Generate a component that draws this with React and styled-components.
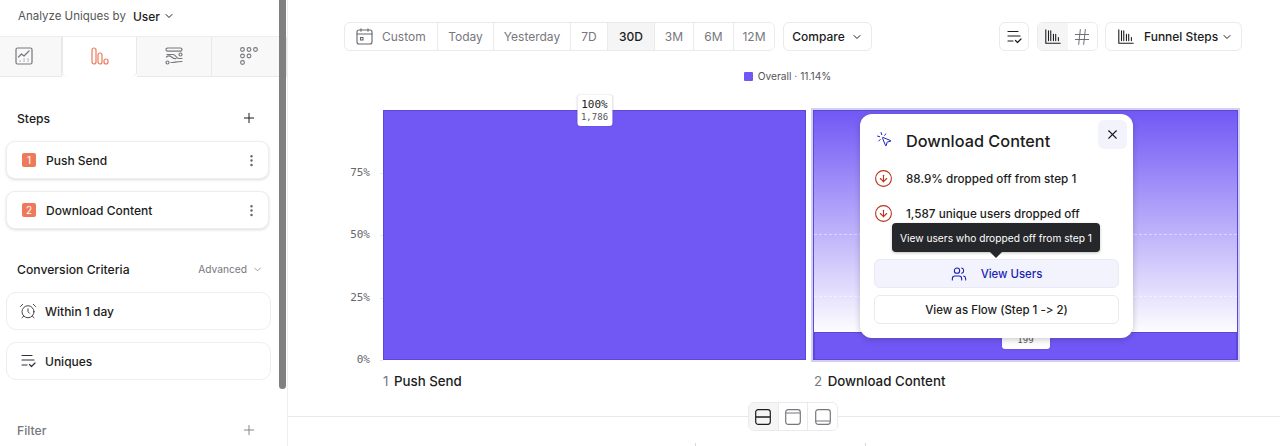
import React from "react";
import styled, { createGlobalStyle } from "styled-components";
import { AlarmClock, ChevronDown, CircleArrowDown, EllipsisVertical, Hash, MousePointerClick, Plus, Users, X } from "lucide-react";

const GlobalStyle = createGlobalStyle`
  html, body {
    margin: 0;
    height: 446px;
    overflow: hidden;
    background: #fff;
    color: #1c1c21;
    font-family: "Inter", "Liberation Sans", sans-serif;
    font-variant-ligatures: none;
    font-feature-settings: "calt" 0, "liga" 0;
    -webkit-font-smoothing: antialiased;
  }
  * { box-sizing: border-box; }
`;

const RANGES = [
  { label: "Today", width: 56 },
  { label: "Yesterday", width: 77 },
  { label: "7D", width: 37 },
  { label: "30D", width: 47, active: true },
  { label: "3M", width: 39 },
  { label: "6M", width: 40 },
  { label: "12M", width: 41 },
];

function ChartIcon({ size = 20 }) {
  return (
    <svg width={size} height={size} viewBox="0 0 20 20" fill="none" stroke="currentColor" strokeWidth="1.2" strokeLinecap="round">
      <path d="M2 2v15h16" />
      <path d="M5 3v11M7.5 3v11M10.5 7v7M13 7v7M16 10.5V14" />
    </svg>
  );
}

function ListCheckIcon({ size = 18 }) {
  return (
    <svg width={size} height={size} viewBox="0 0 18 18" fill="none" stroke="currentColor" strokeWidth="1.2" strokeLinecap="round" strokeLinejoin="round">
      <path d="M3 3.5h10M3 8h12M3 13h5M10.5 12.5l2 2 3.5-3.5" />
    </svg>
  );
}

function TrendTabIcon() {
  return (
    <svg width="18" height="18" viewBox="0 0 18 18" fill="none" stroke="#77777d" strokeWidth="1.2" strokeLinecap="round" strokeLinejoin="round">
      <rect x="1" y="1" width="16" height="16" rx="1.5" />
      <path d="M3.5 10l3-3 2.5 2 5-5" />
      <path d="M5 14h.1M9 14h.1M13 14h.1M9 12h.1M13 12h.1" />
    </svg>
  );
}

function FunnelTabIcon() {
  return (
    <svg width="18" height="18" viewBox="0 0 18 18" fill="none" stroke="#ee7a5c" strokeWidth="1.2">
      <rect x="1" y="1" width="4" height="16" rx="2" />
      <rect x="7" y="6" width="4" height="11" rx="2" />
      <rect x="13" y="12" width="4" height="5" rx="2" />
    </svg>
  );
}

function FlowTabIcon() {
  return (
    <svg width="18" height="18" viewBox="0 0 18 18" fill="none" stroke="#77777d" strokeWidth="1.2" strokeLinecap="round">
      <rect x="1" y="1" width="16" height="3.2" rx="1.6" />
      <path d="M1.5 10c4-4 6 3 9.5 1.500" />
      <path d="M2 7.500h6c3 0 3 4 6 4h3" />
      <circle cx="15.500" cy="7.500" r="1.500" />
      <circle cx="2.500" cy="15.500" r="1.500" />
      <path d="M6 15.500h2c2 0 3-1 9-1" />
    </svg>
  );
}

function RetentionTabIcon() {
  const dots = [[2.500, 2.500], [9, 2.500], [15.500, 2.500], [2.500, 9], [9, 9], [2.500, 15.500]];
  return (
    <svg width="18" height="18" viewBox="0 0 18 18" fill="none" stroke="#77777d" strokeWidth="1.1">
      {dots.map(([x, y]) => (
        <circle key={`${x}-${y}`} cx={x} cy={y} r="1.900" />
      ))}
    </svg>
  );
}

function CalendarIcon() {
  return (
    <svg width="17" height="17" viewBox="0 0 17 17" fill="none" stroke="#66666c" strokeWidth="1.100" strokeLinecap="round">
      <rect x="1" y="2" width="15" height="14" rx="2" />
      <path d="M1 6h15M5 .8v2.400M12 .8v2.400" />
      <rect x="4.500" y="9.500" width="2.500" height="2.500" />
    </svg>
  );
}

function PaneIcon({ variant, active }) {
  return (
    <svg width="16" height="16" viewBox="0 0 16 16" fill="none" stroke={active ? "#1c1c21" : "#77777d"} strokeWidth="1.200">
      <rect x=".7" y=".7" width="14.600" height="14.600" rx="2.500" />
      {variant === "split" && <path d="M1 8h14" strokeWidth="1.600" />}
      {variant === "top" && <path d="M1 4h14" />}
      {variant === "bottom" && <path d="M1 12h14" />}
    </svg>
  );
}

export default function App() {
  return (
    <Page>
      <GlobalStyle />
      <Sidebar>
        <AnalyzeBar>
          Analyze Uniques by <strong>User</strong>
          <ChevronDown size={12} strokeWidth={2} color="#1c1c21" />
        </AnalyzeBar>
        <Tabs>
          <Tab><TrendTabIcon /></Tab>
          <Tab $active><FunnelTabIcon /></Tab>
          <Tab><FlowTabIcon /></Tab>
          <Tab><RetentionTabIcon /></Tab>
        </Tabs>
        <SectionHead $top={30}>
          Steps
          <Plus size={16} strokeWidth={1.500} color="#1c1c21" />
        </SectionHead>
        <StepList>
          <StepCard>
            <StepBadge>1</StepBadge>
            <CardText>Push Send</CardText>
            <EllipsisVertical size={15} color="#66666c" />
          </StepCard>
          <StepCard>
            <StepBadge>2</StepBadge>
            <CardText>Download Content</CardText>
            <EllipsisVertical size={15} color="#66666c" />
          </StepCard>
        </StepList>
        <SectionHead $top={29}>
          Conversion Criteria
          <AdvancedLink>
            Advanced
            <ChevronDown size={11} strokeWidth={1.500} />
          </AdvancedLink>
        </SectionHead>
        <CriteriaList>
          <CriteriaCard>
            <AlarmClock size={18} strokeWidth={1.200} color="#33333a" />
            <CardText>Within 1 day</CardText>
          </CriteriaCard>
          <CriteriaCard>
            <ListCheckIcon size={18} />
            <CardText>Uniques</CardText>
          </CriteriaCard>
        </CriteriaList>
        <SectionHead $top={39} $muted>
          Filter
          <Plus size={16} strokeWidth={1.300} color="#77777d" />
        </SectionHead>
      </Sidebar>
      <ScrollTrack>
        <ScrollThumb />
      </ScrollTrack>
      <Main>
        <Toolbar>
          <Segments>
            <CustomRange>
              <CalendarIcon />
              Custom
            </CustomRange>
            {RANGES.map((range) => (
              <RangeButton key={range.label} $width={range.width} $active={range.active}>
                {range.label}
              </RangeButton>
            ))}
          </Segments>
          <CompareButton>
            Compare
            <ChevronDown size={12} strokeWidth={2} />
          </CompareButton>
          <ToolbarRight>
            <IconButton><ListCheckIcon size={18} /></IconButton>
            <ViewToggle>
              <ToggleCell $active><ChartIcon size={18} /></ToggleCell>
              <ToggleCell><Hash size={20} strokeWidth={1.100} color="#66666c" /></ToggleCell>
            </ViewToggle>
            <FunnelSelect>
              <ChartIcon size={18} />
              <span>Funnel Steps</span>
              <ChevronDown size={12} strokeWidth={2} />
            </FunnelSelect>
          </ToolbarRight>
        </Toolbar>
        <Legend>
          <LegendSwatch />
          Overall · 11.14%
        </Legend>
        <ChartArea>
          <YAxis>
            <span>75%</span>
            <span>50%</span>
            <span>25%</span>
            <span>0%</span>
          </YAxis>
          <Plot>
            <BarColumn>
              <SolidBar $height={250}>
                <ValuePill>
                  <b>100%</b>
                  <i>1,786</i>
                </ValuePill>
              </SolidBar>
            </BarColumn>
            <BarColumn $selected>
              <GridLine $bottom={125} />
              <GridLine $bottom={63} />
              <SolidBar $height={28}>
                <ValuePill $covered>
                  <i>199</i>
                </ValuePill>
              </SolidBar>
            </BarColumn>
            <Popover>
              <PopoverHead>
                <MousePointerClick size={17} strokeWidth={1.400} color="#1a1fb5" />
                <PopoverTitle>Download Content</PopoverTitle>
                <CloseButton><X size={15} strokeWidth={1.800} /></CloseButton>
              </PopoverHead>
              <DropRow>
                <CircleArrowDown size={19} strokeWidth={1.400} color="#b8341c" />
                88.9% dropped off from step 1
              </DropRow>
              <DropRow>
                <CircleArrowDown size={19} strokeWidth={1.400} color="#b8341c" />
                1,587 unique users dropped off
              </DropRow>
              <Tooltip>View users who dropped off from step 1</Tooltip>
              <PrimaryAction>
                <Users size={16} strokeWidth={1.600} />
                View Users
              </PrimaryAction>
              <SecondaryAction>View as Flow (Step 1 -&gt; 2)</SecondaryAction>
            </Popover>
          </Plot>
        </ChartArea>
        <StepLabels>
          <StepLabel><em>1</em> Push Send</StepLabel>
          <StepLabel><em>2</em> Download Content</StepLabel>
        </StepLabels>
        <PaneDivider>
          <PaneToggle>
            <PaneCell $active><PaneIcon variant="split" active /></PaneCell>
            <PaneCell><PaneIcon variant="top" /></PaneCell>
            <PaneCell><PaneIcon variant="bottom" /></PaneCell>
          </PaneToggle>
        </PaneDivider>
        <LowerTicks>
          <i />
          <i />
        </LowerTicks>
      </Main>
    </Page>
  );
}

const Page = styled.div`
  display: flex;
  width: 1280px;
  height: 446px;
  overflow: hidden;
`;

const Sidebar = styled.aside`
  width: 279px;
  flex: none;
  display: flex;
  flex-direction: column;
`;

const AnalyzeBar = styled.div`
  height: 37px;
  padding: 0 0 4px 18px;
  display: flex;
  align-items: center;
  gap: 4px;
  font-size: 11.5px;
  color: #55555b;
  border-bottom: 1px solid #eeeeef;

  strong {
    margin-left: 3px;
    font-size: 12px;
    font-weight: 500;
    color: #1c1c21;
  }
  svg {
    margin-left: -1px;
  }
`;

/* first and last tabs run under the sidebar's edges */
const Tabs = styled.div`
  height: 40px;
  margin-left: -13px;
  display: flex;
`;

const Tab = styled.div`
  width: 75px;
  flex: none;
  display: flex;
  align-items: center;
  justify-content: center;
  padding-bottom: 2px;
  background: ${(p) => (p.$active ? "#fff" : "#f8f8f8")};
  border-bottom: ${(p) => (p.$active ? "none" : "1px solid #e9e9ea")};
  border-left: ${(p) => (p.$active ? "1px solid #e9e9ea" : "none")};
  border-right: 1px solid #e9e9ea;
  border-radius: ${(p) => (p.$active ? "0 0 5px 5px" : "0")};
`;

const SectionHead = styled.div`
  margin-top: ${(p) => p.$top}px;
  height: 22px;
  padding: 0 22px 0 17px;
  display: flex;
  align-items: center;
  justify-content: space-between;
  font-size: 12.2px;
  font-weight: 500;
  color: ${(p) => (p.$muted ? "#77777d" : "#1c1c21")};
`;

const AdvancedLink = styled.span`
  display: flex;
  align-items: center;
  gap: 5px;
  margin-right: -6px;
  font-size: 10.2px;
  font-weight: 400;
  color: #77777d;
`;

const StepList = styled.div`
  margin-top: 12px;
  padding: 0 10px 0 6px;
  display: flex;
  flex-direction: column;
  gap: 12px;
`;

const StepCard = styled.div`
  height: 38px;
  padding: 0 9px 0 15px;
  display: flex;
  align-items: center;
  gap: 10px;
  background: #fff;
  border: 1px solid #eeeeef;
  border-radius: 9px;
  box-shadow: 0 1px 3px rgba(0, 0, 0, 0.14);
`;

const StepBadge = styled.span`
  width: 14px;
  height: 14px;
  flex: none;
  display: flex;
  align-items: center;
  justify-content: center;
  font-size: 10px;
  color: #fff;
  background: #ee7a5c;
  border-radius: 2px;
`;

const CardText = styled.span`
  flex: 1;
  font-size: 12px;
  font-weight: 450;
`;

const CriteriaList = styled.div`
  margin-top: 12px;
  padding: 0 8px 0 6px;
  display: flex;
  flex-direction: column;
  gap: 12px;
`;

const CriteriaCard = styled.div`
  height: 38px;
  padding: 0 12px;
  display: flex;
  align-items: center;
  gap: 8px;
  border: 1px solid #eeeeef;
  border-radius: 10px;
  color: #33333a;

  ${CardText} {
    color: #1c1c21;
  }
`;

const ScrollTrack = styled.div`
  width: 9px;
  flex: none;
  padding-right: 1px;
  border-right: 1px solid #eeeeef;
`;

const ScrollThumb = styled.div`
  width: 7px;
  height: 389px;
  background: #808080;
  border-radius: 0 0 4px 4px;
`;

const Main = styled.main`
  flex: 1;
  min-width: 0;
  display: flex;
  flex-direction: column;
`;

const Toolbar = styled.div`
  margin-top: 22px;
  padding: 0 38px 0 56px;
  display: flex;
  gap: 8px;
  height: 29px;
`;

const Segments = styled.div`
  display: flex;
  border: 1px solid #eaeaeb;
  border-radius: 6px;
  overflow: hidden;
`;

const CustomRange = styled.div`
  width: 92px;
  padding-left: 11px;
  display: flex;
  align-items: center;
  gap: 9px;
  font-size: 12px;
  color: #77777d;
`;

const RangeButton = styled.div`
  width: ${(p) => p.$width}px;
  display: flex;
  align-items: center;
  justify-content: center;
  font-size: 12px;
  font-weight: ${(p) => (p.$active ? 500 : 400)};
  color: ${(p) => (p.$active ? "#1c1c21" : "#77777d")};
  background: ${(p) => (p.$active ? "#f5f5f5" : "#fff")};
  border-left: 1px solid #eaeaeb;
`;

const CompareButton = styled.div`
  width: 89px;
  display: flex;
  align-items: center;
  justify-content: center;
  gap: 6px;
  font-size: 12px;
  font-weight: 450;
  border: 1px solid #eaeaeb;
  border-radius: 6px;
`;

const ToolbarRight = styled.div`
  margin-left: auto;
  display: flex;
  gap: 8px;
`;

const IconButton = styled.div`
  width: 30px;
  display: flex;
  align-items: center;
  justify-content: center;
  border: 1px solid #eaeaeb;
  border-radius: 6px;
`;

const ViewToggle = styled.div`
  width: 61px;
  display: flex;
  border: 1px solid #eaeaeb;
  border-radius: 6px;
  overflow: hidden;
`;

const ToggleCell = styled.div`
  flex: 1;
  display: flex;
  align-items: center;
  justify-content: center;
  background: ${(p) => (p.$active ? "#f5f5f5" : "#fff")};
`;

const FunnelSelect = styled.div`
  width: 137px;
  margin-left: -1px;
  padding-left: 11px;
  display: flex;
  align-items: center;
  font-size: 12px;
  font-weight: 450;
  border: 1px solid #eaeaeb;
  border-radius: 6px;

  span {
    margin: 0 3px 0 9px;
  }
`;

const Legend = styled.div`
  margin-top: 18px;
  padding-left: 7px;
  height: 14px;
  display: flex;
  align-items: center;
  justify-content: center;
  gap: 5px;
  font-size: 10.2px;
  color: #55555b;
`;

const LegendSwatch = styled.span`
  width: 9px;
  height: 9px;
  background: #7158f5;
  border-radius: 1px;
`;

const ChartArea = styled.div`
  margin-top: 27px;
  display: flex;
  height: 250px;
`;

const YAxis = styled.div`
  width: 82px;
  flex: none;
  padding: 56px 0 0 0;
  display: flex;
  flex-direction: column;
  align-items: flex-end;
  justify-content: space-between;
  font-family: "DejaVu Sans Mono", "Liberation Mono", monospace;
  font-size: 11px;
  line-height: 14px;
  color: #66666c;
  margin-bottom: -7px;

  span {
    position: relative;
  }
  span::after {
    content: "";
    position: absolute;
    right: -13px;
    top: 7px;
    width: 3px;
    border-top: 1px solid #e9e9ea;
  }
`;

const Plot = styled.div`
  position: relative;
  margin-left: 13px;
  width: 855px;
  display: grid;
  grid-template-columns: 423px 425px;
  column-gap: 7px;
`;

const BarColumn = styled.div`
  position: relative;
  display: flex;
  align-items: flex-end;
  ${(p) =>
    p.$selected &&
    `
    background: linear-gradient(#7158f5 0%, #ffffff 90%);
    border: 1px solid #5a48d8;
    box-shadow: 0 0 0 2px #d3cff3;
    border-bottom: none;
  `}
`;

const GridLine = styled.div`
  position: absolute;
  left: 0;
  right: 0;
  bottom: ${(p) => p.$bottom}px;
  border-top: 1px dashed rgba(255, 255, 255, 0.45);
`;

const SolidBar = styled.div`
  position: relative;
  width: 100%;
  height: ${(p) => p.$height}px;
  background: #7158f5;
  border: 1px solid #5a48d8;
`;

const ValuePill = styled.div`
  position: absolute;
  left: 50%;
  top: -16px;
  transform: translateX(-50%);
  min-width: ${(p) => (p.$covered ? "48px" : "0")};
  padding: ${(p) => (p.$covered ? "17px" : "3px")} 4px 2px;
  display: flex;
  flex-direction: column;
  align-items: center;
  font-family: "DejaVu Sans Mono", "Liberation Mono", monospace;
  line-height: 13px;
  white-space: nowrap;
  background: #fff;
  border-radius: 3px;
  box-shadow: 0 0 2px rgba(0, 0, 0, 0.2);

  b {
    font-size: 11px;
    font-weight: 400;
    color: #1c1c21;
  }
  i {
    font-size: 9px;
    font-style: normal;
    color: #55555b;
  }
`;

const Popover = styled.div`
  position: absolute;
  left: 477px;
  top: 4px;
  width: 273px;
  height: 224px;
  padding: 6px 14px 0;
  display: flex;
  flex-direction: column;
  background: #fff;
  border-radius: 12px;
  box-shadow: 0 2px 6px rgba(0, 0, 0, 0.2);
`;

const PopoverHead = styled.div`
  height: 29px;
  padding-left: 2px;
  margin-bottom: 6px;
  display: flex;
  align-items: center;
  gap: 13px;

  > svg {
    margin-top: 10px;
  }
`;

const PopoverTitle = styled.span`
  flex: 1;
  margin-top: 13px;
  font-size: 16.3px;
  font-weight: 500;
`;

const CloseButton = styled.div`
  width: 29px;
  height: 29px;
  margin-right: -8px;
  display: flex;
  align-items: center;
  justify-content: center;
  background: #f3f3fc;
  border-radius: 6px;
`;

const DropRow = styled.div`
  height: 35px;
  padding-top: 12px;
  display: flex;
  align-items: center;
  gap: 13px;
  font-size: 11.7px;
  font-weight: 450;
`;

const Tooltip = styled.div`
  position: absolute;
  left: 32px;
  top: 109px;
  width: 208px;
  height: 29px;
  display: flex;
  align-items: center;
  justify-content: center;
  font-size: 10.2px;
  color: #fff;
  background: #26272b;
  border-radius: 4px;
  box-shadow: 0 1px 3px rgba(0, 0, 0, 0.25);

  &::after {
    content: "";
    position: absolute;
    left: 50%;
    bottom: -6px;
    margin-left: -6px;
    border-left: 6px solid transparent;
    border-right: 6px solid transparent;
    border-top: 6px solid #26272b;
  }
`;

const PrimaryAction = styled.div`
  height: 29px;
  margin-top: 34px;
  display: flex;
  align-items: center;
  justify-content: center;
  gap: 14px;
  font-size: 11.4px;
  font-weight: 450;
  color: #1a1fb5;
  background: #f3f3fd;
  border: 1px solid #e9e9fa;
  border-radius: 6px;
`;

const SecondaryAction = styled.div`
  height: 29px;
  margin-top: 7px;
  display: flex;
  align-items: center;
  justify-content: center;
  font-size: 11.5px;
  font-weight: 450;
  border: 1px solid #eaeaeb;
  border-radius: 6px;
`;

const StepLabels = styled.div`
  margin: 12px 0 0 95px;
  display: grid;
  grid-template-columns: 431px 1fr;
`;

const StepLabel = styled.div`
  font-size: 13.3px;
  line-height: 18px;
  font-weight: 450;

  em {
    font-style: normal;
    font-weight: 400;
    color: #77777d;
    margin-right: 2px;
  }
`;

const PaneDivider = styled.div`
  position: relative;
  margin-top: 26px;
  border-top: 1px solid #e9e9ea;
`;

const PaneToggle = styled.div`
  position: absolute;
  left: 460px;
  top: -15px;
  width: 90px;
  height: 29px;
  display: flex;
  background: #fff;
  border: 1px solid #eaeaeb;
  border-radius: 6px;
  overflow: hidden;
`;

const PaneCell = styled.div`
  flex: 1;
  display: flex;
  align-items: center;
  justify-content: center;
  background: ${(p) => (p.$active ? "#f5f5f5" : "#fff")};
  & + & {
    border-left: 1px solid #eaeaeb;
  }
`;

const LowerTicks = styled.div`
  margin: 26px 0 0 407px;
  display: flex;
  gap: 169px;

  i {
    width: 1px;
    height: 3px;
    background: #d8d8da;
  }
`;
